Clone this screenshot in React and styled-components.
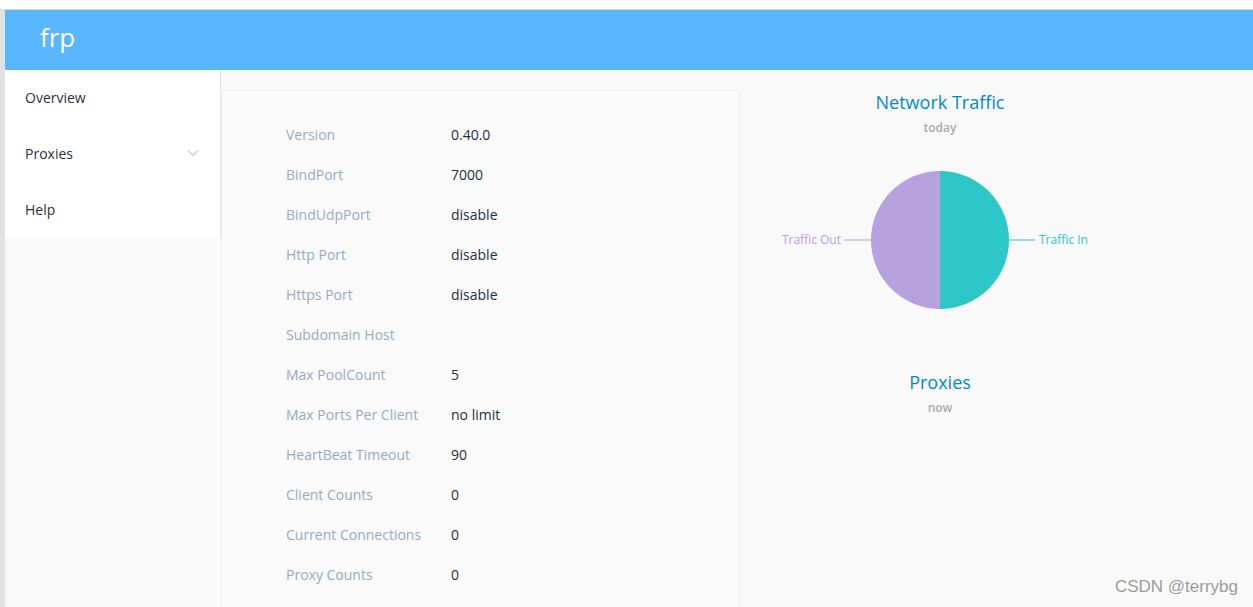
import React from 'react';
import styled, { createGlobalStyle } from 'styled-components';

const GlobalStyle = createGlobalStyle`
  html, body {
    margin: 0;
    padding: 0;
    background: #ffffff;
    font-family: "Open Sans", "Noto Sans", "Liberation Sans", sans-serif;
  }
`;

const Window = styled.div`
  height: 607px;
  overflow: hidden;
  display: flex;
  flex-direction: column;
  position: relative;
`;

const TopStrip = styled.div`
  height: 9px;
  background: #ffffff;
  border-bottom: 1px solid #d9d9d9;
`;

const Frame = styled.div`
  flex: 1;
  display: flex;
  flex-direction: column;
  border-left: 5px solid #e2e2e2;
  background: #f9f9f9;
`;

const Header = styled.header`
  height: 60px;
  box-sizing: border-box;
  background: #58b7ff;
  display: flex;
  align-items: center;
  padding: 0 0 6px 35px;
  color: #ffffff;
  font-size: 26px;
`;

const Body = styled.div`
  flex: 1;
  display: flex;
`;

const Sidebar = styled.nav`
  width: 216px;
  flex-shrink: 0;
`;

const Menu = styled.ul`
  list-style: none;
  margin: 0;
  padding: 0;
  background: #ffffff;
  border-right: 1px solid #e4e4e4;
`;

const MenuItem = styled.li`
  height: 56px;
  box-sizing: border-box;
  display: flex;
  align-items: center;
  justify-content: space-between;
  padding: 0 20px 2px;
  font-size: 14px;
  color: #2d2f3b;
`;

const Chevron = styled.svg`
  width: 12px;
  height: 12px;
  margin-right: 1px;
`;

const Card = styled.section`
  width: 519px;
  margin-top: 20px;
  flex-shrink: 0;
  border: 1px solid #ebedf5;
  border-bottom: none;
  border-radius: 4px 4px 0 0;
  background: #fafafa;
  padding: 23px 0 0 64px;
  box-sizing: border-box;
`;

const Row = styled.div`
  display: flex;
  align-items: center;
  height: 40px;
  font-size: 14px;
`;

const Label = styled.span`
  width: 165px;
  color: #99a9bf;
`;

const Value = styled.span`
  color: #1f2d3d;
`;

const Charts = styled.div`
  width: 400px;
  display: flex;
  flex-direction: column;
  align-items: center;
  padding-top: 20px;
`;

const ChartTitle = styled.div`
  font-size: 18px;
  line-height: 24px;
  color: #008acd;
  margin-top: ${(p) => p.$gap || 0}px;
`;

const ChartSub = styled.div`
  font-size: 12px;
  line-height: 16px;
  margin-top: 6px;
  color: #aaaaaa;
  font-weight: 600;
`;

const Watermark = styled.div`
  position: absolute;
  right: 15px;
  bottom: 10px;
  font-family: "Liberation Sans", Arial, sans-serif;
  font-size: 17px;
  color: #9a9a9a;
  text-shadow: 0 0 2px #ffffff;
`;

const rows = [
  ['Version', '0.40.0'],
  ['BindPort', '7000'],
  ['BindUdpPort', 'disable'],
  ['Http Port', 'disable'],
  ['Https Port', 'disable'],
  ['Subdomain Host', ''],
  ['Max PoolCount', '5'],
  ['Max Ports Per Client', 'no limit'],
  ['HeartBeat Timeout', '90'],
  ['Client Counts', '0'],
  ['Current Connections', '0'],
  ['Proxy Counts', '0'],
];

const TrafficPie = () => (
  <svg width="400" height="208" viewBox="0 0 400 208">
    <path d="M200 35 A69 69 0 0 1 200 173 Z" fill="#2ec7c9" />
    <path d="M200 35 A69 69 0 0 0 200 173 Z" fill="#b6a2de" />
    <line x1="269" y1="104" x2="295" y2="104" stroke="#2ec7c9" strokeOpacity="0.7" strokeWidth="1.5" />
    <line x1="131" y1="104" x2="104" y2="104" stroke="#b6a2de" strokeOpacity="0.7" strokeWidth="1.5" />
    <text x="299" y="108" fontSize="12" fill="#2ec7c9" fontFamily="Open Sans, sans-serif">Traffic In</text>
    <text x="101" y="108" fontSize="12" fill="#b6a2de" textAnchor="end" fontFamily="Open Sans, sans-serif">Traffic Out</text>
  </svg>
);

export default function App() {
  return (
    <Window>
      <GlobalStyle />
      <TopStrip />
      <Frame>
        <Header>frp</Header>
        <Body>
          <Sidebar>
            <Menu>
              <MenuItem>Overview</MenuItem>
              <MenuItem>
                Proxies
                <Chevron viewBox="0 0 12 12">
                  <path d="M1 3.5 L6 8.5 L11 3.5" fill="none" stroke="#97a8be" strokeWidth="1" />
                </Chevron>
              </MenuItem>
              <MenuItem>Help</MenuItem>
            </Menu>
          </Sidebar>
          <Card>
            {rows.map(([k, v]) => (
              <Row key={k}>
                <Label>{k}</Label>
                <Value>{v}</Value>
              </Row>
            ))}
          </Card>
          <Charts>
            <ChartTitle>Network Traffic</ChartTitle>
            <ChartSub>today</ChartSub>
            <TrafficPie />
            <ChartTitle $gap={26}>Proxies</ChartTitle>
            <ChartSub>now</ChartSub>
          </Charts>
        </Body>
      </Frame>
      <Watermark>CSDN @terrybg</Watermark>
    </Window>
  );
}
